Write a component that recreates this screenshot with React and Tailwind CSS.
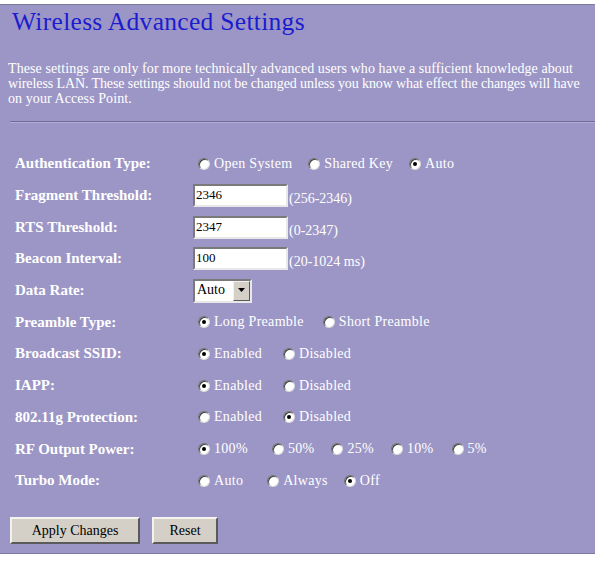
import React from 'react'

function Radio({ checked, label, className = '' }) {
  return (
    <span className={`inline-flex items-center ${className}`}>
      <span className="relative inline-block w-[12px] h-[12px] rounded-full bg-white border border-t-[#6f6f6f] border-l-[#6f6f6f] border-r-[#d8d8d8] border-b-[#d8d8d8] shadow-[inset_1px_1px_0_#404040]">
        {checked && (
          <span className="absolute left-[3px] top-[3px] w-[4px] h-[4px] rounded-full bg-black" />
        )}
      </span>
      <span className="ml-[4px] text-white text-[14px] tracking-[0.3px] leading-none">{label}</span>
    </span>
  )
}

function Row({ label, children, align = 'items-center' }) {
  return (
    <div className={`flex ${align} h-[31.7px]`}>
      <div className="w-[193px] pl-[15px] text-white font-bold text-[15px] leading-none">{label}</div>
      <div className="flex items-center">{children}</div>
    </div>
  )
}

function TextBox({ value, range }) {
  return (
    <div className="flex items-end">
      <div className="w-[95px] h-[23px] bg-white border-2 border-t-[#7a7a7a] border-l-[#7a7a7a] border-r-[#e8e8e8] border-b-[#e8e8e8] text-[13px] leading-none pl-[1px] pt-[2px] text-black">
        {value}
      </div>
      <span className="ml-[1px] text-white text-[14px] leading-none mb-[1px]">{range}</span>
    </div>
  )
}

function Button({ children, className = '' }) {
  return (
    <button className={`h-[27px] bg-[#d4d0c8] text-black text-[14px] border-2 border-t-[#f4f2ee] border-l-[#f4f2ee] border-r-[#5a5a5a] border-b-[#5a5a5a] ${className}`}>
      {children}
    </button>
  )
}

export default function App() {
  return (
    <div className="w-[595px] h-[562px] bg-white overflow-hidden font-['Liberation_Serif',serif]">
      <div className="mt-[4px] h-[550px] bg-[#9c96c6] border-t border-b border-[#7d7aa0]">
        {/* Title */}
        <h1 className="pl-[12px] pt-[2px] text-[25.5px] leading-[30px] tracking-[0.3px] text-[#1c1ccf] font-normal">
          Wireless Advanced Settings
        </h1>

        {/* Description */}
        <p className="mt-[24px] pl-[8px] text-white text-[14px] leading-[15px] tracking-[0.08px] whitespace-nowrap">
          These settings are only for more technically advanced users who have a sufficient knowledge about
          <br />
          <span className="tracking-[-0.1px]">
            wireless LAN. These settings should not be changed unless you know what effect the changes will have
          </span>
          <br />
          on your Access Point.
        </p>
        <div className="ml-[10px] mt-[15px] h-[2px] border-t border-[#6f6b98] border-b border-b-[#b3aed6]" />

        {/* Settings */}
        <div className="mt-[25px]">
          <Row label="Authentication Type:">
            <Radio className="ml-[5px]" label="Open System" />
            <Radio className="ml-[16px]" label="Shared Key" />
            <Radio className="ml-[16px]" checked label="Auto" />
          </Row>
          <Row label="Fragment Threshold:">
            <TextBox value="2346" range="(256-2346)" />
          </Row>
          <Row label="RTS Threshold:">
            <TextBox value="2347" range="(0-2347)" />
          </Row>
          <Row label="Beacon Interval:">
            <TextBox value="100" range="(20-1024 ms)" />
          </Row>
          <Row label="Data Rate:">
            <div className="flex w-[59px] h-[24px] bg-white border-2 border-t-[#7a7a7a] border-l-[#7a7a7a] border-r-[#e8e8e8] border-b-[#e8e8e8]">
              <span className="flex-1 pl-[2px] pt-[2px] text-[14px] leading-none text-black">Auto</span>
              <span className="w-[17px] h-full bg-[#d4d0c8] border border-t-[#f4f2ee] border-l-[#f4f2ee] border-r-[#5a5a5a] border-b-[#5a5a5a] flex items-center justify-center">
                <svg width="8" height="5" viewBox="0 0 8 5">
                  <path d="M0 0h7L3.5 4z" fill="#000" />
                </svg>
              </span>
            </div>
          </Row>
          <Row label="Preamble Type:">
            <Radio className="ml-[5px]" checked label="Long Preamble" />
            <Radio className="ml-[19px]" label="Short Preamble" />
          </Row>
          <Row label="Broadcast SSID:">
            <Radio className="ml-[5px]" checked label="Enabled" />
            <Radio className="ml-[21px]" label="Disabled" />
          </Row>
          <Row label="IAPP:">
            <Radio className="ml-[5px]" checked label="Enabled" />
            <Radio className="ml-[21px]" label="Disabled" />
          </Row>
          <Row label="802.11g Protection:">
            <Radio className="ml-[5px]" label="Enabled" />
            <Radio className="ml-[21px]" checked label="Disabled" />
          </Row>
          <Row label="RF Output Power:">
            <Radio className="ml-[5px]" checked label="100%" />
            <Radio className="ml-[24px]" label="50%" />
            <Radio className="ml-[17px]" label="25%" />
            <Radio className="ml-[17px]" label="10%" />
            <Radio className="ml-[18px]" label="5%" />
          </Row>
          <Row label="Turbo Mode:">
            <Radio className="ml-[5px]" label="Auto" />
            <Radio className="ml-[24px]" label="Always" />
            <Radio className="ml-[16px]" checked label="Off" />
          </Row>
        </div>

        {/* Buttons */}
        <div className="flex gap-[12px] pl-[10px] mt-[20px]">
          <Button className="w-[130px]">Apply Changes</Button>
          <Button className="w-[66px]">Reset</Button>
        </div>
      </div>
    </div>
  )
}
